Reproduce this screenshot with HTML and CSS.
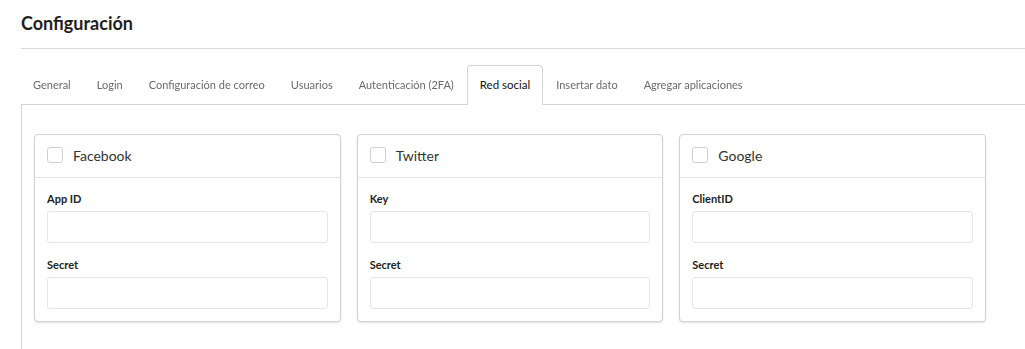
FILE: index.html
```html
<!DOCTYPE html>
<html lang="es">
<head>
<meta charset="utf-8">
<title>Configuración</title>
<link rel="stylesheet" href="styles.css">
</head>
<body>
<div class="page">
  <h1 class="title">Configuración</h1>
  <div class="rule"></div>
  <ul class="tabs">
    <li class="tab">General</li>
    <li class="tab">Login</li>
    <li class="tab">Configuración de correo</li>
    <li class="tab">Usuarios</li>
    <li class="tab">Autenticación (2FA)</li>
    <li class="tab active">Red social</li>
    <li class="tab">Insertar dato</li>
    <li class="tab">Agregar aplicaciones</li>
  </ul>
  <div class="panel">
    <div class="cards">
      <div class="card">
        <div class="card-head"><span class="check"></span><span class="card-title">Facebook</span></div>
        <div class="card-body">
          <label class="label">App ID</label>
          <div class="input"></div>
          <label class="label gap">Secret</label>
          <div class="input"></div>
        </div>
      </div>
      <div class="card">
        <div class="card-head"><span class="check"></span><span class="card-title">Twitter</span></div>
        <div class="card-body">
          <label class="label">Key</label>
          <div class="input"></div>
          <label class="label gap">Secret</label>
          <div class="input"></div>
        </div>
      </div>
      <div class="card">
        <div class="card-head"><span class="check"></span><span class="card-title">Google</span></div>
        <div class="card-body">
          <label class="label">ClientID</label>
          <div class="input"></div>
          <label class="label gap">Secret</label>
          <div class="input"></div>
        </div>
      </div>
    </div>
  </div>
</div>
</body>
</html>
```

FILE: styles.css
```css
html, body {
  margin: 0;
  padding: 0;
  background: #fff;
  overflow: hidden;
}
body {
  font-family: Lato, "Open Sans", sans-serif;
  color: #222;
  height: 349px;
}
.page {
  padding: 11px 0 0 21px;
  width: 1100px;
}
.title {
  margin: 0;
  font-size: 18px;
  line-height: 24px;
  font-weight: 700;
  color: #1f1f1f;
}
.rule {
  margin-top: 13px;
  border-top: 1px solid #dcdcdc;
}
.tabs {
  list-style: none;
  margin: 16px 0 -1px -1px;
  padding: 0;
  display: flex;
  position: relative;
  z-index: 1;
}
.tab {
  height: 38px;
  line-height: 38px;
  padding: 0 12px;
  border: 1px solid transparent;
  border-bottom: 0;
  border-radius: 4px 4px 0 0;
  font-size: 11px;
  color: #6a6a6a;
  filter: blur(0.55px);
  white-space: nowrap;
}
.tab.active {
  filter: none;
  color: #111;
  background: #fff;
  border-color: #d4d4d4;
  height: 39px;
  font-size: 11.5px;
}
.panel {
  border-top: 1px solid #d4d4d4;
  border-left: 1px solid #d4d4d4;
  padding: 29px 0 40px 12px;
}
.cards {
  display: grid;
  grid-template-columns: repeat(3, 306.67px);
  column-gap: 16px;
}
.card {
  border: 1px solid #d2d2d2;
  border-radius: 4px;
  box-shadow: 0 1px 2px rgba(0, 0, 0, 0.12);
  background: #fff;
}
.card-head {
  display: flex;
  align-items: center;
  height: 42px;
  padding: 0 12px;
  border-bottom: 1px solid #e4e4e4;
}
.check {
  width: 14px;
  height: 14px;
  border: 1px solid #cfcfcf;
  border-radius: 3px;
  margin-right: 10px;
  margin-top: -2px;
}
.card-title {
  font-size: 14px;
  color: #333;
  margin-top: -2px;
}
.card-body {
  padding: 13px 12px 12px;
  display: flex;
  flex-direction: column;
}
.label {
  font-size: 11px;
  line-height: 16px;
  font-weight: 700;
  color: #222;
  margin-bottom: 4px;
}
.label.gap {
  margin-top: 14px;
}
.input {
  height: 32px;
  box-sizing: border-box;
  border: 1px solid #e6e6e6;
  border-radius: 3px;
}
```
